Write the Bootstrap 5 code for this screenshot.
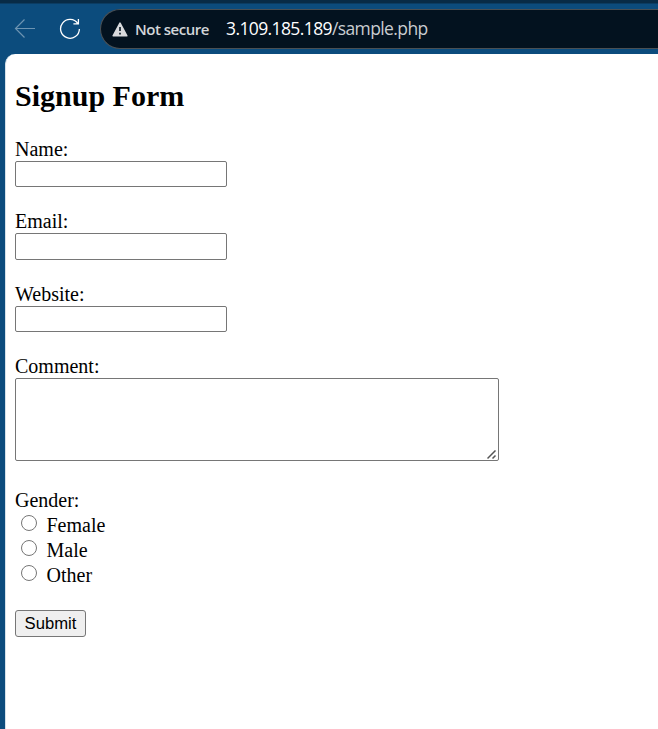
<!DOCTYPE html>
<html lang="en">
<head>
<meta charset="utf-8">
<title>Signup Form</title>
<link href="https://cdn.jsdelivr.net/npm/bootstrap@5.3.0/dist/css/bootstrap.min.css" rel="stylesheet">
<style>
  body { background: #0c4c7d; height: 729px; }
  .tabstrip { height: 4px; background: #082b46; border-bottom: 1px solid #0b3c62; }
  .toolbar { height: 50px; padding: 5px 0 5px 14px; }
  .reload { margin-left: 23px; }
  .address { height: 40px; margin-left: 19px; padding-left: 11px; background: #03121f; border: 1px solid #4a5054; border-right: 0; border-radius: 20px 0 0 20px; font-family: "Open Sans", "Noto Sans", sans-serif; }
  .secure-text { font-size: 15px; font-weight: 600; color: #d3d6d9; margin-left: 7px; width: 91px; letter-spacing: -.5px; }
  .url-text { font-size: 17.5px; color: #c9cdd1; letter-spacing: -.61px; position: relative; top: -1px; }
  .url-host { color: #fff; }
  .page { margin-left: 5px; padding: 25px 0 0 9px; border-left: 1px solid #d5e1ea; border-radius: 10px 0 0 0; color: #000; font: 20px/23px "Liberation Serif", serif; }
  .page h2 { font-size: 30px; font-weight: 700; line-height: 34px; margin: 0 0 25px; }
  .field { height: 72px; }
  .field.tall { height: 73px; }
  .plain { border: 1px solid #767676; border-radius: 2px; background: #fff; padding: 1px 4px; }
  input.plain { width: 212px; height: 26px; }
  .tall input.plain { height: 27px; }
  .comment-box { width: 484px; height: 83px; }
  textarea.plain { resize: none; }
  .grip { right: 2px; bottom: 1px; pointer-events: none; }
  .options { margin-top: 27px; line-height: 25px; }
  .options input { width: 16px; height: 16px; margin: 2px 9.5px 0 6px; appearance: none; border: 1px solid #767676; border-radius: 50%; background: #fff; }
  .submit { width: 71px; height: 27px; margin-top: 22px; border: 1px solid #767676; border-radius: 3px; background: #efefef; color: #000; font: 16.67px/19px "Liberation Sans", sans-serif; padding: 0; }
</style>
<script src="https://cdn.jsdelivr.net/npm/bootstrap@5.3.0/dist/js/bootstrap.bundle.min.js"></script>
</head>
<body class="d-flex flex-column overflow-hidden">
  <div class="tabstrip flex-shrink-0"></div>
  <header class="toolbar d-flex align-items-center flex-shrink-0">
    <svg width="22" height="22" viewBox="0 0 22 22" fill="none" stroke="#6d94b2" stroke-width="1.2"><path d="M21 10.5H1.5M10.5 1.5l-9 9 9 9"/></svg>
    <svg class="reload" width="22" height="22" viewBox="0 0 22 22" fill="none" stroke="#fff" stroke-width="1.3"><path d="M18.8 5.6A9.4 9.4 0 1 0 20.4 11M19.4 1v4.8h-5"/></svg>
    <div class="address d-flex align-items-center flex-grow-1">
      <svg width="16" height="15" viewBox="0 0 16 15"><path d="M8 1.2 14.8 13.8H1.2Z" fill="#d8dadd" stroke="#d8dadd" stroke-width="1.6" stroke-linejoin="round"/><path d="M8 5v4M8 10.8v1.6" stroke="#03121f" stroke-width="1.6"/></svg>
      <span class="secure-text text-nowrap">Not secure</span>
      <span class="url-text text-nowrap"><span class="url-host">3.109.185.189</span>/sample.php</span>
    </div>
  </header>
  <main class="page flex-grow-1 bg-white">
    <h2>Signup Form</h2>
    <form>
      <div class="field"><label class="d-block" for="name">Name:</label><input class="plain d-block" id="name" type="text"></div>
      <div class="field tall"><label class="d-block" for="email">Email:</label><input class="plain d-block" id="email" type="text"></div>
      <div class="field"><label class="d-block" for="website">Website:</label><input class="plain d-block" id="website" type="text"></div>
      <div>
        <label class="d-block" for="comment">Comment:</label>
        <div class="comment-box position-relative">
          <textarea class="plain d-block w-100 h-100" id="comment"></textarea>
          <svg class="grip position-absolute" width="10" height="10" viewBox="0 0 10 10" stroke="#555" stroke-width="1.5" fill="none"><path d="M.5 8.5 8.5.5M5.5 8.5l3-3"/></svg>
        </div>
      </div>
      <div class="options">
        <div>Gender:</div>
        <label class="d-flex align-items-start"><input type="radio" name="gender">Female</label>
        <label class="d-flex align-items-start"><input type="radio" name="gender">Male</label>
        <label class="d-flex align-items-start"><input type="radio" name="gender">Other</label>
      </div>
      <button class="submit d-block" type="button">Submit</button>
    </form>
  </main>
</body>
</html>
